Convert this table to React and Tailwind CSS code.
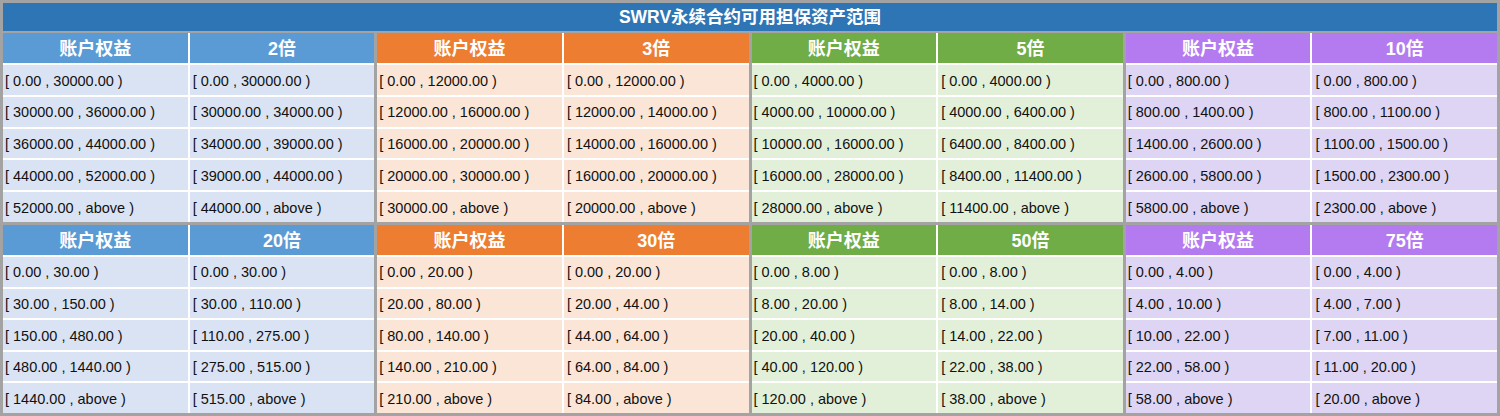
import { Fragment } from "react";

const font = { fontFamily: '"Liberation Sans", "Noto Sans CJK SC", sans-serif' };

const themes = {
  blue: { head: "bg-[#5b9bd5]", cell: "bg-[#dae3f3]" },
  orange: { head: "bg-[#ed7d31]", cell: "bg-[#fbe5d6]" },
  green: { head: "bg-[#70ad47]", cell: "bg-[#e2f0d9]" },
  purple: { head: "bg-[#b47bf0]", cell: "bg-[#ddd5f3]" },
};

const sections = [
  [
    {
      theme: "blue",
      lev: "2倍",
      a: ["0.00", "30000.00", "36000.00", "44000.00", "52000.00"],
      b: ["0.00", "30000.00", "34000.00", "39000.00", "44000.00"],
    },
    {
      theme: "orange",
      lev: "3倍",
      a: ["0.00", "12000.00", "16000.00", "20000.00", "30000.00"],
      b: ["0.00", "12000.00", "14000.00", "16000.00", "20000.00"],
    },
    {
      theme: "green",
      lev: "5倍",
      a: ["0.00", "4000.00", "10000.00", "16000.00", "28000.00"],
      b: ["0.00", "4000.00", "6400.00", "8400.00", "11400.00"],
    },
    {
      theme: "purple",
      lev: "10倍",
      a: ["0.00", "800.00", "1400.00", "2600.00", "5800.00"],
      b: ["0.00", "800.00", "1100.00", "1500.00", "2300.00"],
    },
  ],
  [
    {
      theme: "blue",
      lev: "20倍",
      a: ["0.00", "30.00", "150.00", "480.00", "1440.00"],
      b: ["0.00", "30.00", "110.00", "275.00", "515.00"],
    },
    {
      theme: "orange",
      lev: "30倍",
      a: ["0.00", "20.00", "80.00", "140.00", "210.00"],
      b: ["0.00", "20.00", "44.00", "64.00", "84.00"],
    },
    {
      theme: "green",
      lev: "50倍",
      a: ["0.00", "8.00", "20.00", "40.00", "120.00"],
      b: ["0.00", "8.00", "14.00", "22.00", "38.00"],
    },
    {
      theme: "purple",
      lev: "75倍",
      a: ["0.00", "4.00", "10.00", "22.00", "58.00"],
      b: ["0.00", "4.00", "7.00", "11.00", "20.00"],
    },
  ],
];

// turn break points into "[ a , b )" ranges
function ranges(points) {
  return points.map((p, i) => `[ ${p} , ${i < points.length - 1 ? points[i + 1] : "above"} )`);
}

function Group({ group }) {
  const t = themes[group.theme];
  const left = ranges(group.a);
  const right = ranges(group.b);

  return (
    <div className="w-[372px] grid grid-cols-2 grid-rows-[30px_repeat(5,1fr)] gap-[2px] bg-white">
      <div className={`${t.head} flex items-center justify-center pt-[3px] text-white font-bold text-[18px]`}>账户权益</div>
      <div className={`${t.head} flex items-center justify-center pt-[3px] text-white font-bold text-[18px]`}>{group.lev}</div>
      {left.map((txt, i) => (
        <Fragment key={i}>
          <div className={`${t.cell} flex items-center pl-[2px] pt-[3px] text-[14.5px] text-[#111]`}>{txt}</div>
          <div className={`${t.cell} flex items-center pl-[3px] pt-[3px] text-[14.5px] text-[#111]`}>{right[i]}</div>
        </Fragment>
      ))}
    </div>
  );
}

export default function App() {
  return (
    <div style={font} className="w-[1500px] h-[416px] bg-[#a3a3a3] p-[3px] flex flex-col">
      <div className="h-[28px] bg-[#2e75b6] flex items-center justify-center pt-[1px] text-white font-bold text-[17.5px]">
        SWRV永续合约可用担保资产范围
      </div>
      <div className="mt-[2px] h-[189px] flex gap-[3px]">
        {sections[0].map((g) => (
          <Group key={g.lev} group={g} />
        ))}
      </div>
      <div className="mt-[3px] flex-1 flex gap-[3px]">
        {sections[1].map((g) => (
          <Group key={g.lev} group={g} />
        ))}
      </div>
    </div>
  );
}
